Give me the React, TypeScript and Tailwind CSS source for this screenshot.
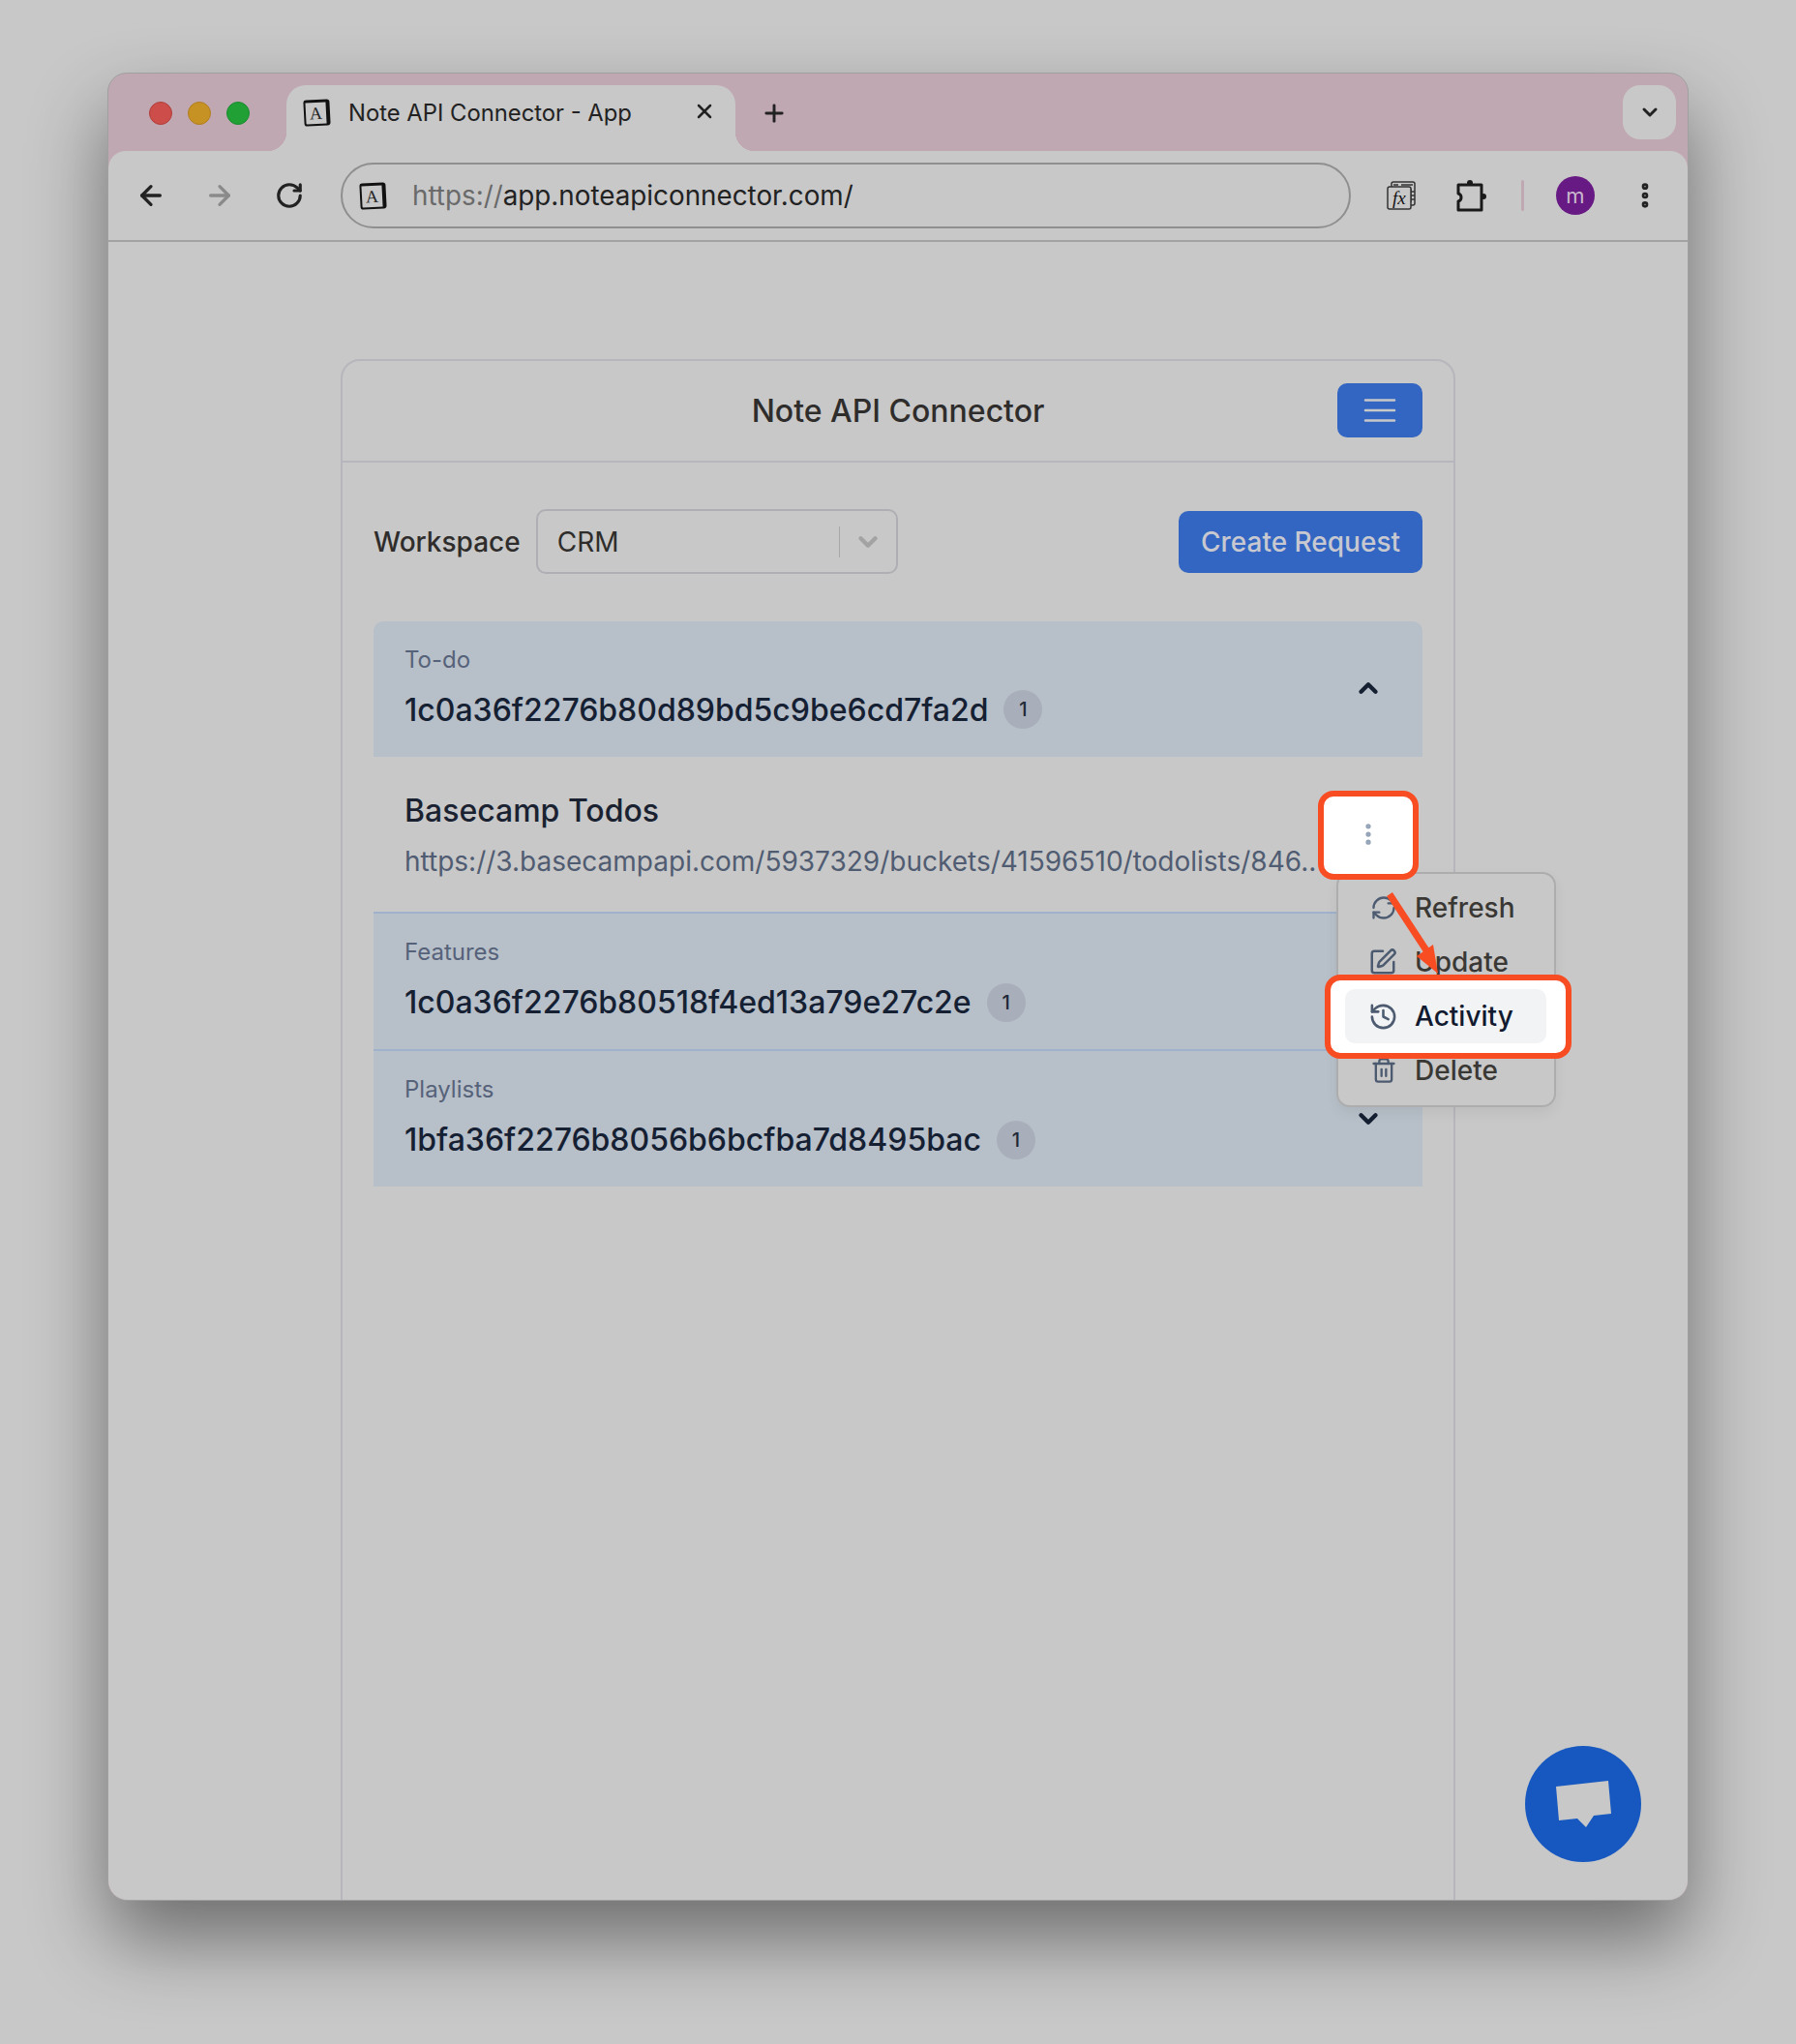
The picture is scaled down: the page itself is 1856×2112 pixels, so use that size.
import { ArrowLeft, ArrowRight, ChevronDown, ChevronUp, EllipsisVertical, History, Plus, RefreshCw, RotateCw, SquarePen, Trash2, X } from "lucide-react";

const rows = [
  { id: "features", label: "Features", value: "1c0a36f2276b80518f4ed13a79e27c2e" },
  { id: "playlists", label: "Playlists", value: "1bfa36f2276b8056b6bcfba7d8495bac" },
];

const Favicon = ({ className }: { className: string }) => (
  <div className={`flex h-[27px] w-[27px] rotate-[-3deg] items-center justify-center rounded-[3px] border-[2px] border-r-[4px] border-t-[3px] border-[#111] bg-[#c8c8c8] font-['Liberation_Serif',serif] text-[18px] leading-none text-[#222] ${className}`}>
    A
  </div>
);

const Badge = () => (
  <span className="flex h-[40px] w-[40px] shrink-0 items-center justify-center rounded-full bg-[#a9afba] text-[20px] font-medium text-[#1f2937]">1</span>
);

const Row = ({ label, value, open, first }: { label: string; value: string; open?: boolean; first?: boolean }) => (
  <div className={`flex items-center justify-between bg-[#b7bfc8] pl-[32px] pr-[41px] ${first ? "h-[140px] rounded-t-[10px]" : "h-[142px] border-t-2 border-[#9fb1cb]"}`}>
    <div className={`flex flex-col ${first ? "-mt-[3px]" : "-mt-[2px]"}`}>
      <span className="text-[24px] leading-[35px] text-[#56627a]">{label}</span>
      <div className="mt-[10px] flex items-center gap-[16px]">
        <span className="text-[32px] font-medium leading-[49px] text-[#152033]">{value}</span>
        <Badge />
      </div>
    </div>
    {open ? <ChevronUp size={30} strokeWidth={3.5} className="-mt-[2px] text-[#152033]" /> : <ChevronDown size={30} strokeWidth={3.5} className="text-[#152033]" />}
  </div>
);

const MenuItem = ({ icon, label }: { icon: React.ReactNode; label: string }) => (
  <div className="flex h-[56px] items-center gap-[18px] pl-[33px] text-[28px] font-medium text-[#3a3835]">
    <span className="flex w-[28px] justify-center text-[#4d5b70]">{icon}</span>
    {label}
  </div>
);

export default function App() {
  return (
    <div className="relative h-[2112px] w-[1856px] overflow-hidden bg-[#c8c8c8] pl-[111px] pt-[75px] font-['Inter',sans-serif]">
      {/* browser window */}
      <div className="relative flex h-[1889px] w-[1634px] flex-col rounded-[20px] border border-[#a0a0a0] bg-[#c0a8b3] shadow-[0_40px_80px_rgba(0,0,0,0.45)]">
        {/* tab strip */}
        <div className="flex h-[80px] shrink-0 items-start">
          <div className="flex gap-[16px] pl-[42px] pt-[29px]">
            <span className="h-[24px] w-[24px] rounded-full border border-[#b03e3a] bg-[#cc4d49]" />
            <span className="h-[24px] w-[24px] rounded-full border border-[#b07d20] bg-[#c79224]" />
            <span className="h-[24px] w-[24px] rounded-full border border-[#1b8a30] bg-[#20a035]" />
          </div>
          <div className="relative ml-[38px] mt-[12px] flex h-[68px] w-[464px] items-start rounded-t-[20px] bg-[#c8c8c8] pl-[18px] pt-[14px]">
            <div className="absolute -left-[20px] bottom-0 h-[20px] w-[20px] bg-[radial-gradient(circle_at_0_0,#c0a8b3_20px,#c8c8c8_20.5px)]" />
            <div className="absolute -right-[20px] bottom-0 h-[20px] w-[20px] bg-[radial-gradient(circle_at_100%_0,#c0a8b3_20px,#c8c8c8_20.5px)]" />
            <Favicon className="mt-[1px]" />
            <span className="ml-[19px] text-[23.8px] leading-[30px] text-[#222]">Note API Connector - App</span>
            <X size={24} strokeWidth={2.5} className="absolute right-[20px] top-[15px] text-[#222]" />
          </div>
          <Plus size={28} strokeWidth={2.5} className="ml-[26px] mt-[27px] text-[#222]" />
          <div className="ml-auto mr-[12px] mt-[12px] flex h-[56px] w-[55px] items-center justify-center rounded-[18px] bg-[#c8c8c8]">
            <ChevronDown size={24} strokeWidth={3} className="text-[#222]" />
          </div>
        </div>

        {/* toolbar */}
        <div className="flex h-[94px] shrink-0 items-center rounded-t-[18px] border-b-2 border-[#a3a3a3] bg-[#c8c8c8] pl-[28px]">
          <ArrowLeft size={32} strokeWidth={2.5} className="text-[#222]" />
          <ArrowRight size={32} strokeWidth={2.5} className="ml-[39px] text-[#8a8a8a]" />
          <RotateCw size={30} strokeWidth={2.5} className="ml-[41px] text-[#222]" />
          <div className="ml-[38px] flex h-[68px] w-[1044px] items-center rounded-full border-2 border-[#8f8f8f] pl-[18px]">
            <Favicon className="" />
            <span className="ml-[27px] mt-[1px] text-[27.8px] text-[#6a6a6a]">https://<span className="text-[#222]">app.noteapiconnector.com/</span></span>
          </div>
          <svg width="32" height="32" viewBox="0 0 32 32" className="ml-[36px] text-[#333]">
            <rect x="6" y="2" width="24" height="24" rx="2" fill="none" stroke="currentColor" strokeWidth="1.5" />
            <path d="M8 5h5M16 5h12M26 9v14M26 12h4M26 16h4M26 20h4" stroke="currentColor" strokeWidth="1.5" />
            <rect x="2" y="7" width="24" height="23" rx="2" fill="#c8c8c8" stroke="currentColor" strokeWidth="1.5" />
            <text x="7" y="25" fontFamily="Liberation Serif, serif" fontStyle="italic" fontSize="19" fill="#111">fx</text>
          </svg>
          <svg width="36" height="36" viewBox="0 0 36 36" className="ml-[37px] text-[#1a1a1a]">
            <circle cx="18" cy="5" r="3" fill="currentColor" />
            <circle cx="32" cy="19" r="3" fill="currentColor" />
            <path d="M6 7h24v26H6v-9c4-1 4-7 0-8z" fill="none" stroke="currentColor" strokeWidth="3" strokeLinejoin="round" />
          </svg>
          <span className="ml-[35px] h-[32px] w-[3px] rounded-full bg-[#c0a8b3]" />
          <span className="ml-[33px] flex h-[40px] w-[40px] items-center justify-center rounded-full bg-[#681a84] text-[22px] leading-none text-[#c8b8cc]">m</span>
          <EllipsisVertical size={32} strokeWidth={3} className="ml-[36px] text-[#222]" />
        </div>

        {/* page */}
        <div className="min-h-0 flex-1 overflow-hidden rounded-b-[20px] bg-[#c8c8c8] pl-[240px] pt-[121px]">
          <div className="h-[1700px] w-[1152px] rounded-t-[20px] border-2 border-[#b6b6bc]">
            <div className="relative flex h-[105px] items-center justify-center border-b-2 border-[#b6b6bc]">
              <h1 className="text-[32px] font-medium text-[#2f2d2b]">Note API Connector</h1>
              <button className="absolute right-[32px] top-[23px] flex h-[56px] w-[88px] items-center justify-center rounded-[10px] bg-[#3366c2]">
                <svg width="34" height="24" viewBox="0 0 34 24" stroke="#c8c8c8" strokeWidth="2.600" strokeLinecap="round">
                  <path d="M2 1.500h30M2 12h30M2 22.500h30" />
                </svg>
              </button>
            </div>

            <div className="px-[32px] pt-[48px]">
              <div className="flex items-center justify-between">
                <div className="flex items-center gap-[16px]">
                  <span className="text-[28px] font-medium text-[#2f2d2b]">Workspace</span>
                  <div className="flex h-[67px] w-[374px] items-center rounded-[10px] border-2 border-[#aeaeb4] pl-[20px]">
                    <span className="text-[28px] text-[#2f2d2b]">CRM</span>
                    <span className="ml-auto h-[32px] w-[1px] bg-[#a8a8a8]" />
                    <ChevronDown size={30} strokeWidth={3.500} className="ml-[14px] mr-[14px] text-[#a3a3a3]" />
                  </div>
                </div>
                <button className="h-[64px] w-[252px] rounded-[10px] bg-[#3366c2] text-[28px] font-medium text-[#c8c8d0]">Create Request</button>
              </div>

              <div className="mt-[49px] flex flex-col">
                <Row first open label="To-do" value="1c0a36f2276b80d89bd5c9be6cd7fa2d" />
                <div className="flex h-[160px] flex-col pl-[32px] pt-[31px]">
                  <span className="text-[32px] font-medium leading-[49px] text-[#1a2231]">Basecamp Todos</span>
                  <span className="mt-[7px] whitespace-nowrap text-[28px] leading-[42px] text-[#505c72]">https://3.basecampapi.com/5937329/buckets/41596510/todolists/846..</span>
                </div>
                {rows.map((row) => (
                  <Row key={row.id} label={row.label} value={row.value} />
                ))}
              </div>
            </div>
          </div>
        </div>

        {/* chat widget */}
        <div className="absolute left-[1464px] top-[1728px] flex h-[120px] w-[120px] items-center justify-center rounded-full bg-[#1658bf]">
          <svg width="58" height="50" viewBox="0 0 58 50" fill="#c8c8c8">
            <path d="M1 7 55 1 58 35 40 37 32 49 23 40 4 42Z" />
          </svg>
        </div>
      </div>

      {/* dropdown menu */}
      <div className="absolute left-[1381px] top-[901px] h-[243px] w-[227px] rounded-[14px] border-2 border-[#adadad] bg-[#c8c8c8] pt-[7px] shadow-[0_6px_14px_rgba(0,0,0,0.06)]">
        <MenuItem icon={<RefreshCw size={28} strokeWidth={2} />} label="Refresh" />
        <MenuItem icon={<SquarePen size={30} strokeWidth={2} className="-ml-[3px]" />} label="Update" />
        <div className="h-[56px]" />
        <MenuItem icon={<Trash2 size={28} strokeWidth={2} />} label="Delete" />
      </div>

      {/* callout arrow */}
      <svg width="1856" height="2112" className="pointer-events-none absolute left-0 top-0">
        <path d="M1436 924 1474 982" stroke="#f84c23" strokeWidth="7" fill="none" />
        <path d="M1464 988 1481 976 1486 1006Z" fill="#f84c23" />
      </svg>

      {/* kebab highlight */}
      <div className="absolute left-[1362px] top-[817px] flex h-[92px] w-[104px] items-center justify-center rounded-[16px] border-[6px] border-[#f84c23] bg-white">
        <EllipsisVertical size={28} strokeWidth={2.500} className="-mt-[2px] text-[#94a3b8]" />
      </div>

      {/* activity highlight */}
      <div className="absolute left-[1369px] top-[1007px] flex h-[87px] w-[255px] items-center justify-center rounded-[16px] border-[6px] border-[#f84c23] bg-white">
        <div className="-ml-[5px] -mt-[1px] flex h-[56px] w-[208px] items-center gap-[17px] rounded-[10px] bg-[#f2f3f5] pl-[24px] text-[28px] font-medium text-[#111a2e]">
          <History size={31} strokeWidth={2} className="text-[#4d5b70]" />
          Activity
        </div>
      </div>
    </div>
  );
}
